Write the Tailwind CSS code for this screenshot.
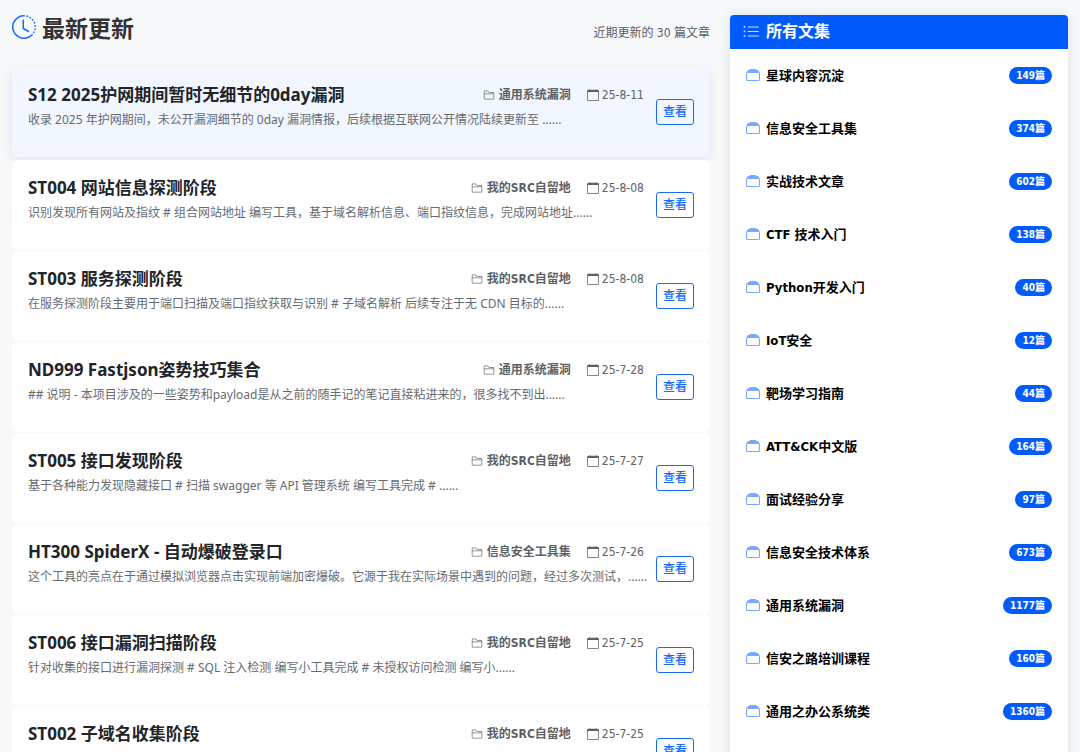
<!DOCTYPE html>
<html lang="zh-CN">
<head>
<meta charset="utf-8">
<title>最新更新</title>
<script src="https://cdn.jsdelivr.net/npm/@tailwindcss/browser@4"></script>
</head>
<body class="h-screen overflow-hidden bg-[#f7f8fa] font-['DejaVu_Sans_Condensed','Noto_Sans_CJK_SC',sans-serif] text-[#212529]">
<svg class="hidden" aria-hidden="true">
  <symbol id="clock" viewBox="0 0 16 16"><path d="M8.515 1.019A7 7 0 0 0 8 1V0a8 8 0 0 1 .589.022zm2.004.45a7 7 0 0 0-.985-.299l.219-.976q.576.129 1.126.342zm1.37.71a7 7 0 0 0-.439-.27l.493-.87a8 8 0 0 1 .979.654l-.615.789a7 7 0 0 0-.418-.302zm1.834 1.79a7 7 0 0 0-.653-.796l.724-.69q.406.429.747.91zm.744 1.352a7 7 0 0 0-.214-.468l.893-.45a8 8 0 0 1 .45 1.088l-.95.313a7 7 0 0 0-.179-.483m.53 2.507a7 7 0 0 0-.1-1.025l.985-.17q.1.58.116 1.17zm-.131 1.538q.05-.254.081-.51l.993.123a8 8 0 0 1-.23 1.155l-.964-.267q.069-.247.12-.501m-.952 2.379q.276-.436.486-.908l.914.405q-.24.54-.555 1.038zm-.964 1.205q.183-.183.35-.378l.758.653a8 8 0 0 1-.401.432z"/><path d="M8 1a7 7 0 1 0 4.95 11.95l.707.707A8.001 8.001 0 1 1 8 0z"/><path d="M7.5 3a.5.5 0 0 1 .5.5v5.21l3.248 1.856a.5.5 0 0 1-.496.868l-3.5-2A.5.5 0 0 1 7 9V3.5a.5.5 0 0 1 .5-.5"/></symbol>
  <symbol id="folder" viewBox="0 0 16 16"><path d="M1 3.500A1.500 1.500 0 0 1 2.500 2h2.764c.958 0 1.760.560 2.311 1.184C7.985 3.648 8.480 4 9 4h4.500A1.500 1.500 0 0 1 15 5.500v7a1.500 1.500 0 0 1-1.500 1.500h-11A1.500 1.500 0 0 1 1 12.500zM2.500 3a.5.5 0 0 0-.5.5V6h12v-.5a.5.5 0 0 0-.5-.5H9c-.964 0-1.710-.629-2.174-1.154C6.374 3.334 5.820 3 5.264 3zM14 7H2v5.500a.5.5 0 0 0 .5.5h11a.5.5 0 0 0 .5-.5z"/></symbol>
  <symbol id="calendar" viewBox="0 0 16 16"><path d="M3.500 0a.5.5 0 0 1 .5.5V1h8V.5a.5.5 0 0 1 1 0V1h1a2 2 0 0 1 2 2v11a2 2 0 0 1-2 2H2a2 2 0 0 1-2-2V3a2 2 0 0 1 2-2h1V.5a.5.5 0 0 1 .5-.5M1 4v10a1 1 0 0 0 1 1h12a1 1 0 0 0 1-1V4z"/></symbol>
  <symbol id="list" viewBox="0 0 16 16"><path fill-rule="evenodd" d="M5 11.500a.5.5 0 0 1 .5-.5h9a.5.5 0 0 1 0 1h-9a.5.5 0 0 1-.5-.5m0-4a.5.5 0 0 1 .5-.5h9a.5.5 0 0 1 0 1h-9a.5.5 0 0 1-.5-.5m0-4a.5.5 0 0 1 .5-.5h9a.5.5 0 0 1 0 1h-9a.5.5 0 0 1-.5-.5"/><path d="M1.500 2.700h1.400v1.500H1.500zM1.500 6.700h1.400v1.500H1.500zM1.500 10.700h1.400v1.500H1.500z"/></symbol>
  <symbol id="collection" viewBox="0 0 14 14"><path d="M4 1h6l.5 1H12l1.500 2.200H.5L2 2h1.500z"/><path fill-rule="evenodd" d="M1.500 4h11A1.500 1.500 0 0 1 14 5.500v6a1.500 1.500 0 0 1-1.500 1.500h-11A1.500 1.500 0 0 1 0 11.500v-6A1.500 1.500 0 0 1 1.500 4M1.600 5.100a.5.5 0 0 0-.5.5v5.800a.5.5 0 0 0 .5.5h10.800a.5.5 0 0 0 .5-.5V5.600a.5.5 0 0 0-.5-.5z"/></symbol>
</svg>
<div class="flex items-start gap-5 px-3 pt-[15px]">
  <main class="min-w-0 flex-1">
    <header class="flex h-7 items-center justify-between">
      <h1 class="flex items-center gap-1.5 text-[23px] font-bold leading-7 text-[#333]"><svg class="mb-1 size-6 fill-[#1668ff]"><use href="#clock"/></svg>最新更新</h1>
      <span class="pt-2 text-xs text-[#5b6167]">近期更新的 30 篇文章</span>
    </header>
    <div id="posts" class="mt-6 flex flex-col gap-px"></div>
  </main>
  <aside class="w-[338px] shrink-0 rounded bg-white pb-10 shadow-[0_0_12px_rgba(0,0,0,0.1)]">
    <h2 class="flex h-[34px] items-center gap-1.5 rounded-t bg-[#005bfa] px-3 text-base font-bold text-white"><svg class="size-[18px] fill-white/80"><use href="#list"/></svg>所有文集</h2>
    <ul id="sets"></ul>
  </aside>
</div>
<template id="post">
  <article class="flex h-[90px] items-start gap-3 rounded-md bg-white px-4 pt-4">
    <div class="min-w-0 flex-1">
      <div class="flex h-6 items-center justify-between">
        <h3 class="whitespace-nowrap font-['Noto_Sans','Noto_Sans_CJK_SC',sans-serif] text-[17px] font-bold leading-6" data-k="title"></h3>
        <div class="flex items-center gap-4 text-xs text-[#5b6167]">
          <span class="flex items-center gap-1 font-bold"><svg class="size-3 fill-[#70757a]"><use href="#folder"/></svg><span data-k="cat"></span></span>
          <span class="flex items-center gap-[3px]"><svg class="size-3 fill-[#5b6167]"><use href="#calendar"/></svg><time data-k="date"></time></span>
        </div>
      </div>
      <p class="mt-[3px] whitespace-nowrap font-['Noto_Sans','Noto_Sans_CJK_SC',sans-serif] text-xs leading-5 text-[#666b70]" data-k="text"></p>
    </div>
    <a href="#" class="mt-4 flex h-[26px] w-[38px] items-center justify-center rounded-[3px] border border-[#1668ff] text-xs font-medium text-[#1668ff]">查看</a>
  </article>
</template>
<template id="set">
  <li class="h-[53px]"><a href="#" class="flex h-[53px] items-center justify-between px-4">
    <span class="flex items-center gap-1.5 text-[13px] font-bold text-black"><svg class="mb-0.5 size-3.5 fill-[#78a9ff]"><use href="#collection"/></svg><span data-k="name"></span></span>
    <span class="flex h-[17px] items-center rounded-full bg-[#005bfa] px-[7px] text-[10px] font-bold text-white" data-k="count"></span>
  </a></li>
</template>
<script>
const fill = (tpl, host, keys, rows) => rows.forEach((row) => {
  const node = document.getElementById(tpl).content.cloneNode(true);
  keys.forEach((k, i) => { node.querySelector(`[data-k=${k}]`).textContent = row[i]; });
  document.getElementById(host).append(node);
});
fill('post', 'posts', ['title', 'cat', 'date', 'text'], [
  ['S12 2025护网期间暂时无细节的0day漏洞', '通用系统漏洞', '25-8-11', '收录 2025 年护网期间，未公开漏洞细节的 0day 漏洞情报，后续根据互联网公开情况陆续更新至 ......'],
  ['ST004 网站信息探测阶段', '我的SRC自留地', '25-8-08', '识别发现所有网站及指纹 # 组合网站地址 编写工具，基于域名解析信息、端口指纹信息，完成网站地址......'],
  ['ST003 服务探测阶段', '我的SRC自留地', '25-8-08', '在服务探测阶段主要用于端口扫描及端口指纹获取与识别 # 子域名解析 后续专注于无 CDN 目标的......'],
  ['ND999 Fastjson姿势技巧集合', '通用系统漏洞', '25-7-28', '## 说明 - 本项目涉及的一些姿势和payload是从之前的随手记的笔记直接粘进来的，很多找不到出......'],
  ['ST005 接口发现阶段', '我的SRC自留地', '25-7-27', '基于各种能力发现隐藏接口 # 扫描 swagger 等 API 管理系统 编写工具完成 # ......'],
  ['HT300 SpiderX - 自动爆破登录口', '信息安全工具集', '25-7-26', '这个工具的亮点在于通过模拟浏览器点击实现前端加密爆破。它源于我在实际场景中遇到的问题，经过多次测试，......'],
  ['ST006 接口漏洞扫描阶段', '我的SRC自留地', '25-7-25', '针对收集的接口进行漏洞探测 # SQL 注入检测 编写小工具完成 # 未授权访问检测 编写小......'],
  ['ST002 子域名收集阶段', '我的SRC自留地', '25-7-25', ''],
]);
document.querySelector('article').classList.replace('bg-white', 'bg-[#f1f6ff]');
document.querySelector('article').classList.add('mb-0.5', 'shadow-[0_3px_12px_rgba(0,0,0,0.08)]');
fill('set', 'sets', ['name', 'count'], [
  ['星球内容沉淀', '149篇'], ['信息安全工具集', '374篇'], ['实战技术文章', '602篇'], ['CTF 技术入门', '138篇'],
  ['Python开发入门', '40篇'], ['IoT安全', '12篇'], ['靶场学习指南', '44篇'], ['ATT&CK中文版', '164篇'],
  ['面试经验分享', '97篇'], ['信息安全技术体系', '673篇'], ['通用系统漏洞', '1177篇'], ['信安之路培训课程', '160篇'],
  ['通用之办公系统类', '1360篇'],
]);
</script>
</body>
</html>
